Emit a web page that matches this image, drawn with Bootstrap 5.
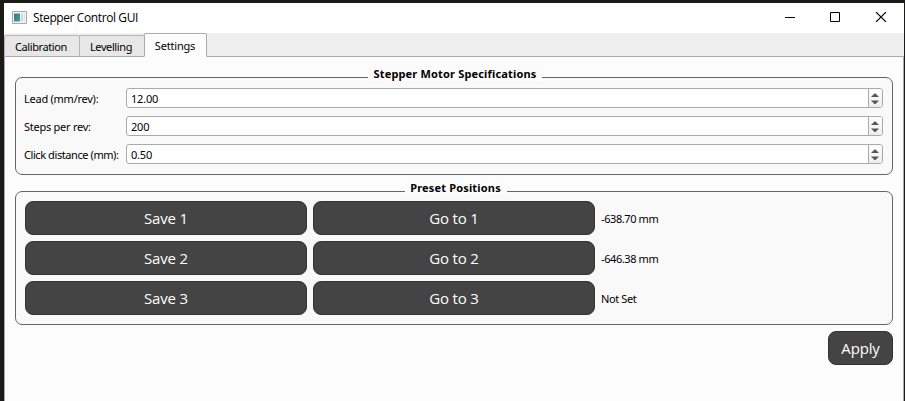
<!DOCTYPE html>
<html lang="en">
<head>
<meta charset="utf-8">
<meta name="viewport" content="width=device-width, initial-scale=1">
<title>Stepper Control GUI</title>
<link href="https://cdn.jsdelivr.net/npm/bootstrap@5.3.0/dist/css/bootstrap.min.css" rel="stylesheet">
<style>
body{background:#1c1a19;height:401px;overflow:hidden;padding:3px 1px 0 4px;font:11px/14px "Noto Sans",sans-serif;letter-spacing:-.4px;color:#000}
.app-window{height:398px;background:#fcfcfc}
.title-bar{height:30px;background:#fff;padding:0 17px 2px 8px}
.title-text{font:12px/16px "Open Sans","Noto Sans",sans-serif;letter-spacing:-.4px;margin:2px 0 0 6px}
.win-controls{gap:35px}
.tab-strip{height:24px;background:#efefef;border:0;box-shadow:inset 0 -1px #aaa}
.tab-strip .nav-link{height:22px;padding:0 2px 0 0;border:1px solid #b4b4b4;border-bottom-color:#aaa;border-radius:2px 2px 0 0;background:#e7e7e7;color:#000;margin:0 -1px 0 0;text-align:center;line-height:21px}
.tab-strip .nav-link.active{height:24px;background:#fcfcfc;border-color:#aaa;border-bottom-color:#fcfcfc;margin:0;padding:0 1px 0 0;line-height:23px;letter-spacing:-.2px}
.tab-a{width:76px}.tab-b{width:66px}.tab-c{width:63px}
.page-area{height:344px;border:solid #aaa;border-width:0 1px;padding:20px 10px 0}
.group-box{border:1px solid #666;border-radius:7px;background:#f9f9f9;padding:10px 9px 0 8px}
.group-title{height:14px;margin-top:-21px;margin-bottom:7px;font:bold 11px/14px "Noto Sans",sans-serif;letter-spacing:.17px}
.group-title span{background:#fcfcfc;padding:0 4px;height:14px;white-space:nowrap;text-align:center}
.specs{height:98px}.presets{height:134px;margin-top:16px}
.presets .group-title{margin-bottom:6px}
.title-a{width:174px;margin-left:3px}.title-b{width:102px;margin-left:4px}
.spec-row{height:20px;margin-bottom:8px}
.spec-label{width:102px;white-space:nowrap;padding-top:4px;letter-spacing:-.25px}
.label-tight{letter-spacing:-.42px}
.spin{height:20px;border:1px solid #aaa;border-radius:3px;background:#fff;overflow:hidden}
.spin input{border:0;outline:0;padding:2px 0 0 4px;font:inherit;letter-spacing:-.2px;color:#000;min-width:0;background:transparent}
.spin-arrows{width:14px;border-left:1px solid #aaa;background:linear-gradient(#fdfdfd,#ededed)}
.preset-row{gap:6px;margin-bottom:6px;margin-left:1px}
.preset-row span{padding-top:2px}
.dark-btn{height:34px;width:282px;padding:0;border:1px solid #333;border-radius:8px;background:#444;color:#fff;font:15px/31px "Open Sans","Noto Sans",sans-serif;letter-spacing:-.17px}
.apply-btn{width:65px;margin-top:6px;padding-top:1px}
svg{display:block}
</style>
<script src="https://cdn.jsdelivr.net/npm/bootstrap@5.3.0/dist/js/bootstrap.bundle.min.js"></script>
</head>
<body>
<svg class="d-none"><symbol id="arrows" viewBox="0 0 13 18"><path d="M2 8l3.500-3.500h1L10 8zM2 11.500h8L6.500 15h-1z" fill="#555"/></symbol></svg>
<main class="app-window">
<header class="title-bar d-flex align-items-center justify-content-between">
<div class="d-flex align-items-center">
<svg width="15" height="13" viewBox="0 0 15 13"><defs><linearGradient id="g" x2="1" y2="1"><stop stop-color="#3d70a0"/><stop offset="1" stop-color="#48a080"/></linearGradient></defs><path d="M.5.5h14v12H.5z" fill="#f3f3f3" stroke="#a3aaaf"/><path d="M2 2.500h6v8H2z" fill="url(#g)"/><path d="M9 2.500h2v8H9z" fill="#c5dbd5"/><path d="M12 2.500h1v8h-1z" fill="#dce5e3"/></svg>
<span class="title-text">Stepper Control GUI</span>
</div>
<div class="win-controls d-flex" role="group" aria-label="Window">
<svg width="10" height="10"><path d="M0 5.500h10" stroke="#000"/></svg>
<svg width="10" height="10"><path d="M.5.5h9v9h-9z" stroke="#000" fill="none"/></svg>
<svg width="12" height="10"><path d="M1 0l10 10M11 0L1 10" stroke="#000" stroke-width="1.100"/></svg>
</div>
</header>
<nav class="tab-strip nav nav-tabs align-items-end">
<a class="nav-link tab-a">Calibration</a><a class="nav-link tab-b">Levelling</a><a class="nav-link active tab-c">Settings</a>
</nav>
<div class="page-area">
<section class="group-box specs">
<div class="group-title d-flex justify-content-center"><span class="title-a">Stepper Motor Specifications</span></div>
<div class="spec-row d-flex"><label class="spec-label" for="a">Lead (mm/rev):</label><div class="spin d-flex flex-grow-1"><input id="a" class="flex-grow-1" value="12.00"><div class="spin-arrows"><svg width="13" height="18"><use href="#arrows"/></svg></div></div></div>
<div class="spec-row d-flex"><label class="spec-label" for="b">Steps per rev:</label><div class="spin d-flex flex-grow-1"><input id="b" class="flex-grow-1" value="200"><div class="spin-arrows"><svg width="13" height="18"><use href="#arrows"/></svg></div></div></div>
<div class="spec-row d-flex"><label class="spec-label label-tight" for="c">Click distance (mm):</label><div class="spin d-flex flex-grow-1"><input id="c" class="flex-grow-1" value="0.50"><div class="spin-arrows"><svg width="13" height="18"><use href="#arrows"/></svg></div></div></div>
</section>
<section class="group-box presets">
<div class="group-title d-flex justify-content-center"><span class="title-b">Preset Positions</span></div>
<div class="preset-row d-flex align-items-center"><button class="btn dark-btn">Save 1</button><button class="btn dark-btn">Go to 1</button><span>-638.70 mm</span></div>
<div class="preset-row d-flex align-items-center"><button class="btn dark-btn">Save 2</button><button class="btn dark-btn">Go to 2</button><span>-646.38 mm</span></div>
<div class="preset-row d-flex align-items-center"><button class="btn dark-btn">Save 3</button><button class="btn dark-btn">Go to 3</button><span>Not Set</span></div>
</section>
<div class="d-flex justify-content-end"><button class="btn dark-btn apply-btn">Apply</button></div>
</div>
</main>
</body>
</html>
